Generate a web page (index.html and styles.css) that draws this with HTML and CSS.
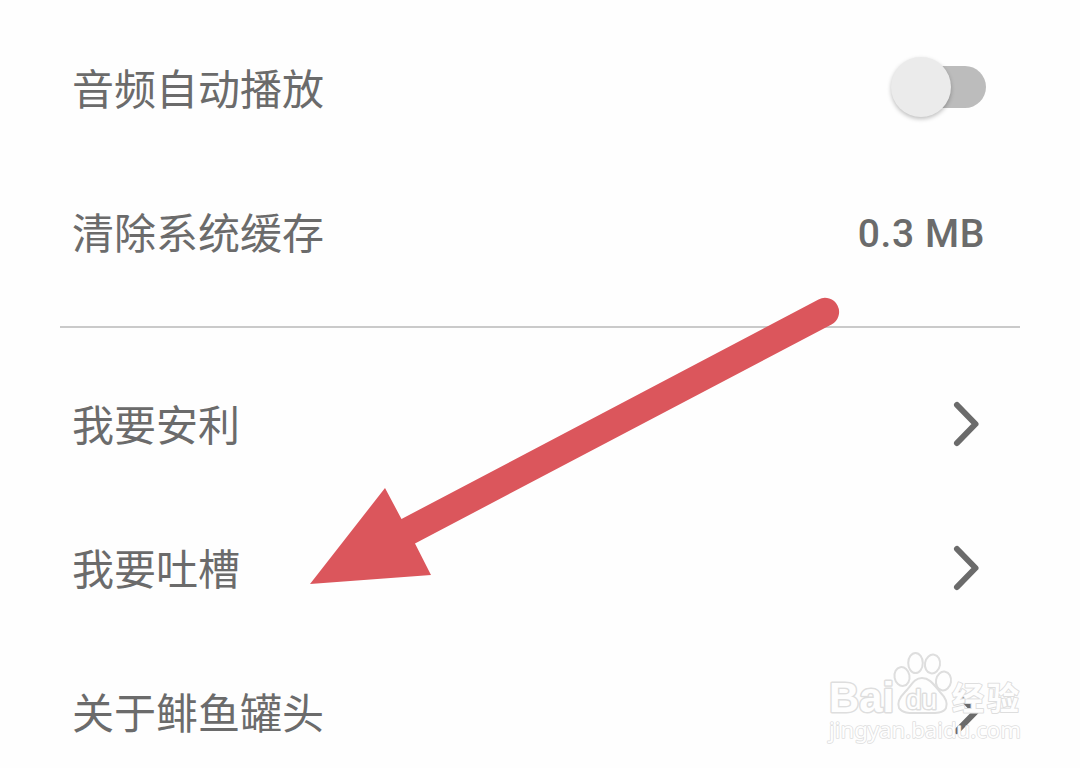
FILE: index.html
```html
<!DOCTYPE html>
<html lang="zh-CN">
<head>
    <meta charset="utf-8">
    <title>设置</title>
    <link rel="stylesheet" href="styles.css">
</head>
<body>
    <main class="settings">
        <ul class="group">
            <li class="row">
                <span class="label">音频自动播放</span>
                <span class="switch"><span class="knob"></span></span>
            </li>
            <li class="row">
                <span class="label">清除系统缓存</span>
                <span class="value">0.3 MB</span>
            </li>
        </ul>
        <hr>
        <ul class="group">
            <li class="row">
                <span class="label">我要安利</span>
                <svg class="chevron" width="30" height="48" viewBox="0 0 30 48"><path d="M6 5 L24.500 24 L6 43"/></svg>
            </li>
            <li class="row">
                <span class="label">我要吐槽</span>
                <svg class="chevron" width="30" height="48" viewBox="0 0 30 48"><path d="M6 5 L24.500 24 L6 43"/></svg>
            </li>
            <li class="row">
                <span class="label">关于鲱鱼罐头</span>
                <svg class="chevron" width="30" height="48" viewBox="0 0 30 48"><path d="M6 5 L24.500 24 L6 43"/></svg>
            </li>
        </ul>
    </main>

    <!-- red arrow pointing at the feedback row -->
    <svg class="arrow" width="540" height="300" viewBox="300 290 540 300">
        <path d="M310 584 L385 488 L401.5 519 L818.500 299.500 A14 14 0 0 1 831.500 324.500 L415 543.500 L431 575 Z"/>
    </svg>

    <!-- watermark -->
    <svg class="watermark" width="220" height="110" viewBox="810 645 220 110">
        <text class="wm-name" x="829" y="712" textLength="65" lengthAdjust="spacingAndGlyphs">Bai</text>
        <ellipse cx="902" cy="676.500" rx="7.500" ry="9.500" transform="rotate(-10 902 676.500)"/>
        <ellipse cx="915.500" cy="663" rx="7.300" ry="10"/>
        <ellipse cx="932.500" cy="664" rx="7.500" ry="9.500" transform="rotate(10 932.500 664)"/>
        <ellipse cx="943.500" cy="681" rx="7.500" ry="9.500" transform="rotate(10 943.500 681)"/>
        <path d="M922 678 C930 678 934 685 940 692 C946 698 948 703 946 708 C943 714 934 713 922 713 C910 713 903 714 899 708 C897 703 899 698 905 692 C911 686 914 678 922 678 Z"/>
        <text class="wm-du" x="906" y="709" textLength="31" lengthAdjust="spacingAndGlyphs">du</text>
        <text class="wm-cn" x="952" y="710" textLength="67">经验</text>
        <text class="wm-url" x="829" y="738" textLength="192" lengthAdjust="spacingAndGlyphs">jingyan.baidu.com</text>
    </svg>
</body>
</html>
```

FILE: styles.css
```css
body {
    margin: 0;
    height: 768px;
    overflow: hidden;
    position: relative;
    background-color: #fefefe;
    color: #6b6b6b;
    font-family: Roboto, "Noto Sans CJK SC", sans-serif;
}
.settings {
    padding: 18px 60px 0;
}
.group {
    list-style: none;
    margin: 0;
    padding: 0 34px 0 12px;
}
.row {
    display: flex;
    align-items: center;
    justify-content: space-between;
    height: 144px;
}
.label {
    margin-top: -6px;
    font-family: "Noto Sans CJK SC", sans-serif;
    font-size: 42px;
    line-height: 60px;
}
.value {
    font-size: 39px;
    font-weight: 500;
    letter-spacing: 0.6px;
    margin-right: 1px;
}
hr {
    height: 2px;
    margin: 20px 0 26px;
    border: none;
    background-color: #cacaca;
}

/* switch, off state */
.switch {
    display: flex;
    align-items: center;
    width: 84px;
    height: 42px;
    margin-top: -6px;
    border-radius: 21px;
    background-color: #bcbcbc;
}
.knob {
    width: 60px;
    height: 60px;
    margin-left: -11px;
    border-radius: 50%;
    background-color: #ebebeb;
    box-shadow: 0 2px 4px rgba(0, 0, 0, 0.25);
}

.chevron {
    margin: -4px 5px 0 0;
    fill: none;
    stroke: #6b6b6b;
    stroke-width: 6;
    stroke-linecap: round;
    stroke-linejoin: round;
}

/* overlays */
.arrow {
    position: absolute;
    left: 300px;
    top: 290px;
    fill: #db565c;
}
.watermark {
    position: absolute;
    left: 810px;
    top: 645px;
    fill: #fefefe;
    stroke: #dedede;
    stroke-width: 2;
}
.watermark text {
    paint-order: stroke;
    stroke-width: 3;
    stroke-linejoin: round;
}
.wm-name {
    font: bold 42px "Liberation Sans", sans-serif;
}
.wm-du {
    font: 27px "Liberation Sans", sans-serif;
}
.watermark .wm-cn {
    font: bold 32px "Noto Sans CJK SC", sans-serif;
    stroke-width: 2;
}
.watermark .wm-url {
    font: 22px "Noto Sans", sans-serif;
    stroke-width: 1.6;
}
```
